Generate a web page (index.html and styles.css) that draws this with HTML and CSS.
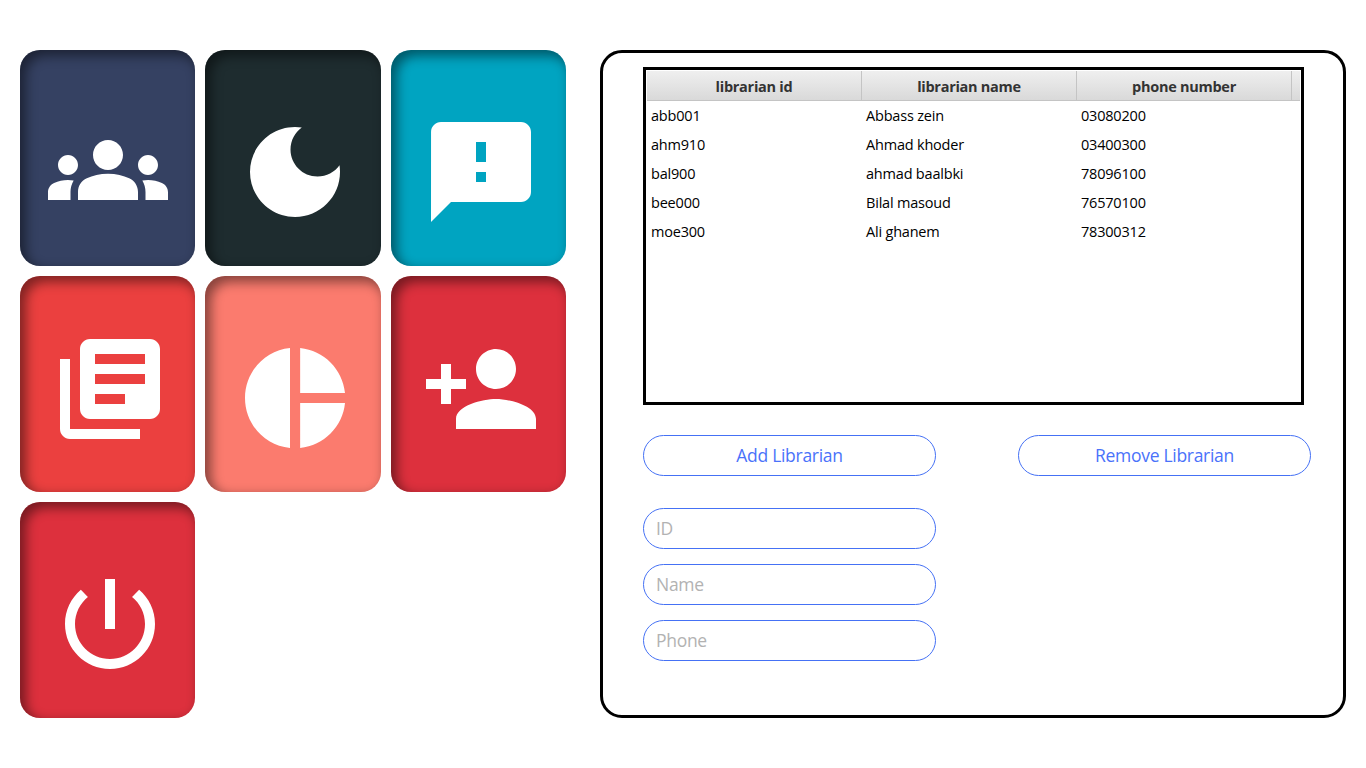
FILE: index.html
```html
<!DOCTYPE html>
<html lang="en">
<head>
<meta charset="utf-8">
<title>Librarians</title>
<link rel="stylesheet" href="styles.css">
</head>
<body>
<main class="app">
  <nav class="tiles">
    <a class="tile tile-navy tile-groups"><svg class="icon" viewBox="0 0 24 24"><path d="M12 12.75c1.63 0 3.07.39 4.24.9 1.08.48 1.76 1.56 1.76 2.73V18H6v-1.61c0-1.18.68-2.26 1.76-2.73 1.17-.52 2.61-.91 4.24-.91zM4 13c1.1 0 2-.9 2-2s-.9-2-2-2-2 .9-2 2 .9 2 2 2zm1.13 1.1c-.37-.06-.74-.1-1.13-.1-.99 0-1.93.21-2.78.58C.48 14.9 0 15.62 0 16.43V18h4.5v-1.61c0-.83.23-1.61.63-2.29zM20 13c1.1 0 2-.9 2-2s-.9-2-2-2-2 .9-2 2 .9 2 2 2zm4 3.43c0-.81-.48-1.53-1.22-1.85-.85-.37-1.79-.58-2.78-.58-.39 0-.76.04-1.13.1.4.68.63 1.46.63 2.29V18H24v-1.57zM12 6c1.66 0 3 1.34 3 3s-1.34 3-3 3-3-1.34-3-3 1.34-3 3-3z"/></svg></a>
    <a class="tile tile-dark"><svg class="icon" viewBox="0 0 24 24"><path d="M12 3c-4.97 0-9 4.03-9 9s4.03 9 9 9 9-4.03 9-9c0-.46-.04-.92-.1-1.36-.98 1.37-2.58 2.26-4.4 2.26-2.98 0-5.4-2.42-5.4-5.4 0-1.81.89-3.42 2.26-4.4-.44-.06-.9-.1-1.36-.1z"/></svg></a>
    <a class="tile tile-teal"><svg class="icon" viewBox="0 0 24 24"><path d="M20 2H4c-1.1 0-1.99.9-1.99 2L2 22l4-4h14c1.1 0 2-.9 2-2V4c0-1.1-.9-2-2-2zm-7 12h-2v-2h2v2zm0-4h-2V6h2v4z"/></svg></a>
    <a class="tile tile-red tile-raised"><svg class="icon" viewBox="0 0 24 24"><path d="M4 6H2v14c0 1.1.9 2 2 2h14v-2H4V6zm16-4H8c-1.1 0-2 .9-2 2v12c0 1.1.9 2 2 2h12c1.1 0 2-.9 2-2V4c0-1.1-.9-2-2-2zm-1 9H9V9h10v2zm-4 4H9v-2h6v2zm4-8H9V5h10v2z"/></svg></a>
    <a class="tile tile-salmon"><svg class="icon" viewBox="0 0 24 24"><path d="M11 2v20c-5.07-.5-9-4.79-9-10s3.93-9.5 9-10zm2.03 0v8.99H22c-.47-4.74-4.24-8.52-8.97-8.99zm0 11.01V22c4.74-.47 8.5-4.25 8.97-8.99h-8.97z"/></svg></a>
    <a class="tile tile-crimson tile-raised"><svg class="icon" viewBox="0 0 24 24"><path d="M15 12c2.21 0 4-1.79 4-4s-1.79-4-4-4-4 1.79-4 4 1.79 4 4 4zm-9-2V7H4v3H1v2h3v3h2v-3h3v-2H6zm9 4c-2.67 0-8 1.34-8 4v2h16v-2c0-2.66-5.33-4-8-4z"/></svg></a>
    <a class="tile tile-crimson"><svg class="icon" viewBox="0 0 24 24"><path d="M13 3h-2v10h2V3zm4.83 2.17l-1.42 1.42C17.99 7.86 19 9.81 19 12c0 3.87-3.13 7-7 7s-7-3.13-7-7c0-2.19 1.01-4.14 2.58-5.42L6.17 5.17C4.23 6.82 3 9.26 3 12c0 4.97 4.03 9 9 9s9-4.03 9-9c0-2.74-1.23-5.18-3.17-6.83z"/></svg></a>
  </nav>

  <section class="panel">
    <div class="table">
      <div class="row head"><span class="th">librarian id</span><span class="th">librarian name</span><span class="th">phone number</span><span class="filler"></span></div>
      <div class="row"><span class="td">abb001</span><span class="td">Abbass zein</span><span class="td">03080200</span></div>
      <div class="row"><span class="td">ahm910</span><span class="td">Ahmad khoder</span><span class="td">03400300</span></div>
      <div class="row"><span class="td">bal900</span><span class="td">ahmad baalbki</span><span class="td">78096100</span></div>
      <div class="row"><span class="td">bee000</span><span class="td">Bilal masoud</span><span class="td">76570100</span></div>
      <div class="row"><span class="td">moe300</span><span class="td">Ali ghanem</span><span class="td">78300312</span></div>
    </div>
    <div class="actions">
      <button class="pill button">Add Librarian</button>
      <button class="pill button">Remove Librarian</button>
    </div>
    <form class="fields">
      <input class="pill field" placeholder="ID">
      <input class="pill field" placeholder="Name">
      <input class="pill field" placeholder="Phone">
    </form>
  </section>
</main>
</body>
</html>
```
FILE: styles.css
```css
* { box-sizing: border-box; }
body {
  margin: 0;
  background: #fff;
  font-family: "Open Sans", "Noto Sans", sans-serif;
}
.app {
  display: flex;
  gap: 34px;
  height: 768px;
  padding: 50px 20px;
}
.tiles {
  display: grid;
  grid-template-columns: repeat(3, 1fr);
  grid-template-rows: repeat(3, 216px);
  gap: 10px;
  width: 546px;
}
.tile {
  padding: 62px 0 0 30px;
  border-radius: 20px;
  box-shadow: inset 5px 5px 12px 1px rgba(0, 0, 0, .46);
}
.tile-groups { padding: 60px 0 0 28px; }
.tile-raised { padding-top: 53px; }
.tile-navy { background: #354162; }
.tile-dark { background: #1e2c2f; }
.tile-teal { background: #00a4c1; }
.tile-red { background: #eb403f; }
.tile-salmon { background: #fb7b6e; }
.tile-crimson { background: #dd303d; }
.icon {
  display: block;
  width: 120px;
  height: 120px;
  fill: #fff;
}
.panel {
  width: 746px;
  height: 668px;
  padding: 14px 32px 0 40px;
  border: 3px solid #000;
  border-radius: 22px;
}
.table {
  width: 661px;
  height: 338px;
  padding: 1px;
  border: 3px solid #000;
  font-size: 14.5px;
  letter-spacing: -.2px;
  color: #000;
}
.row {
  display: flex;
  height: 29px;
  line-height: 29px;
}
.head {
  height: 30px;
  line-height: 31px;
  width: 653px;
  background: linear-gradient(#efefef, #d9d9d9);
  border-bottom: 1px solid #c4c4c4;
  font-weight: 700;
  letter-spacing: -.27px;
  color: #333;
}
.th {
  width: 215px;
  border-right: 1px solid #c4c4c4;
  text-align: center;
}
.td {
  width: 215px;
  padding-left: 4px;
}
.filler { flex: 1; }
.actions {
  display: flex;
  justify-content: space-between;
  margin-top: 30px;
}
.pill {
  width: 293px;
  height: 41px;
  border: 1px solid #4571f5;
  border-radius: 20.5px;
  background: #fff;
  font-family: inherit;
  font-size: 17.5px;
  font-weight: 400;
  letter-spacing: -.3px;
}
.button {
  padding: 0 0 1px;
  color: #4a72fa;
}
.fields {
  display: flex;
  flex-direction: column;
  gap: 15px;
  margin-top: 32px;
}
.field { padding: 0 12px 1px; }
.field::placeholder { color: #b2b2b2; opacity: 1; }
```
